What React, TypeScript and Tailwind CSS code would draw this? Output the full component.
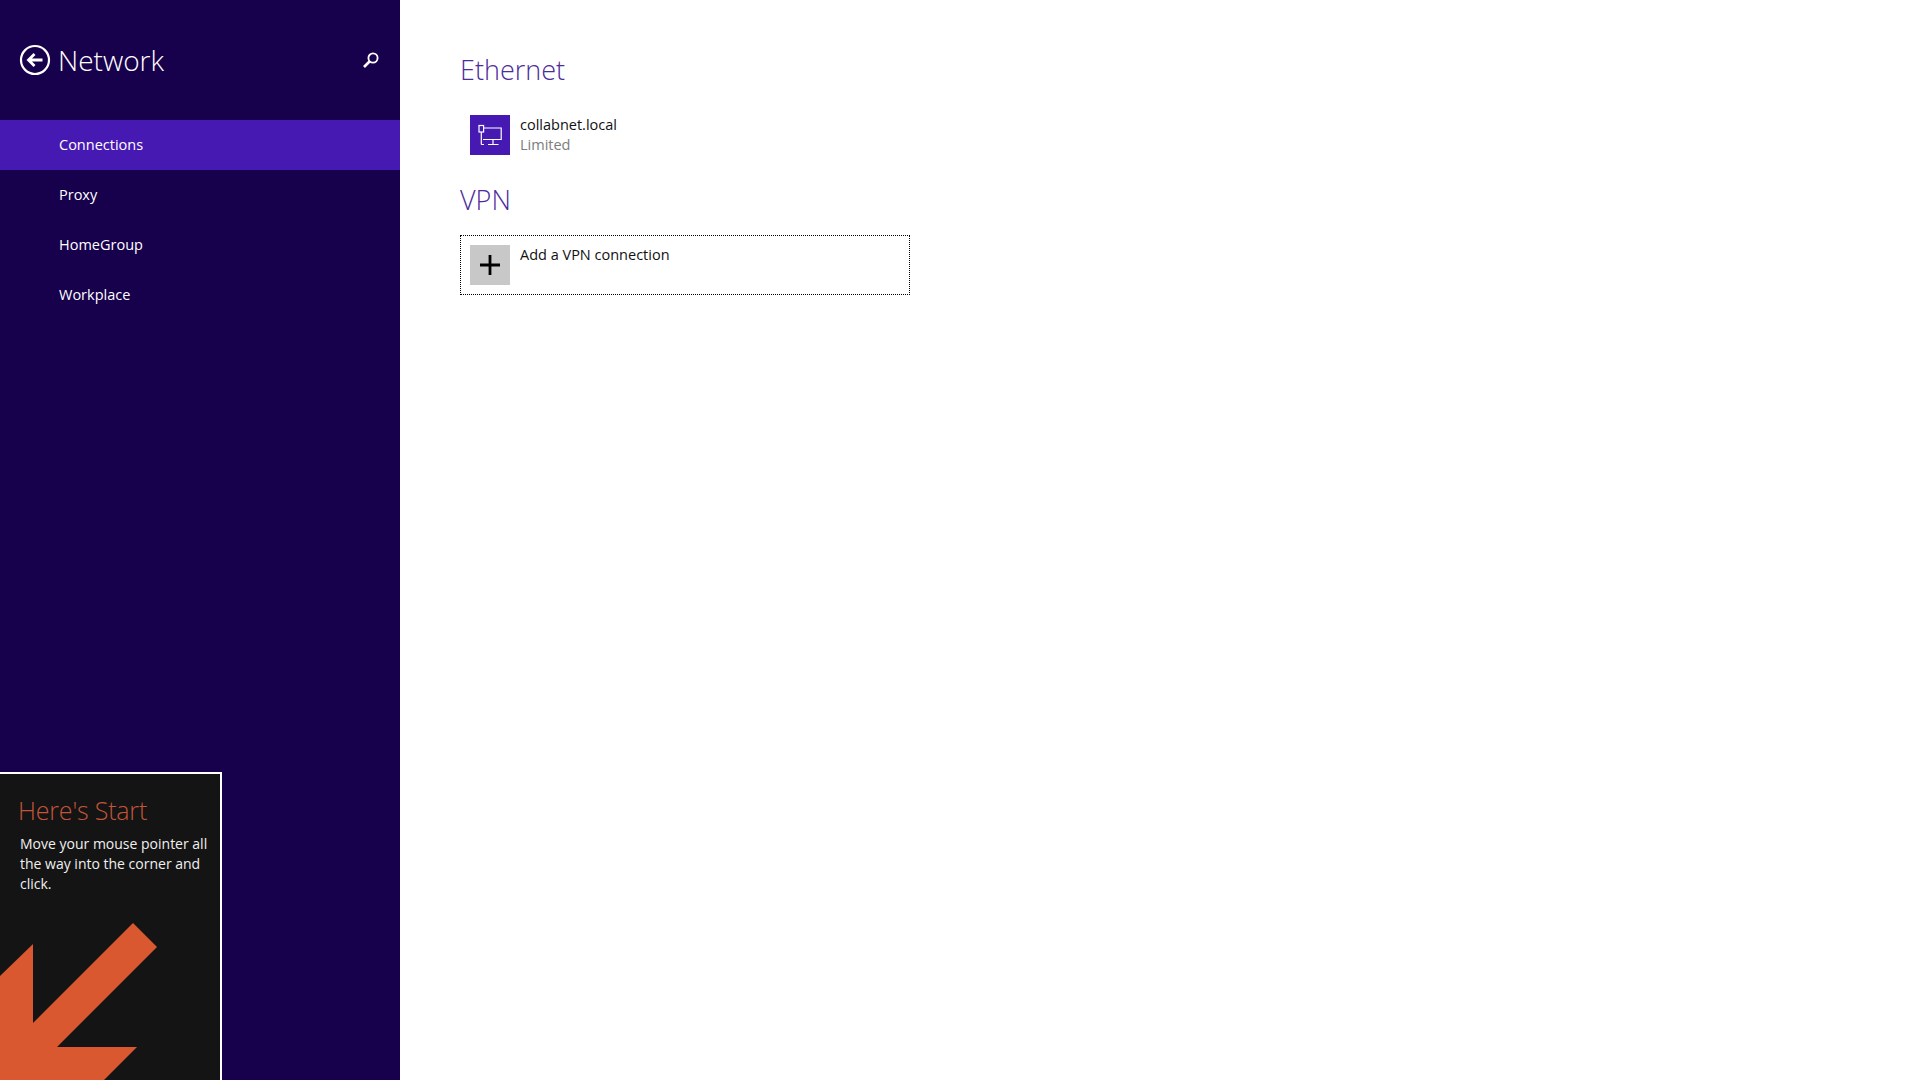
const menu = ["Connections", "Proxy", "HomeGroup", "Workplace"];

function BackIcon() {
  return (
    <svg width="32" height="32" viewBox="0 0 32 32" fill="none" stroke="white">
      <circle cx="16" cy="16" r="14" strokeWidth="2.2" />
      <path d="M23.5 16H10M15.5 10l-6 6 6 6" strokeWidth="2.8" />
    </svg>
  );
}

function SearchIcon() {
  return (
    <svg width="18" height="18" viewBox="0 0 18 18" fill="none" stroke="white">
      <circle cx="11" cy="7" r="4.6" strokeWidth="1.8" />
      <path d="M7.5 10.5L2 16" strokeWidth="2.6" />
    </svg>
  );
}

function EthernetIcon() {
  return (
    <svg width="40" height="40" viewBox="0 0 40 40" fill="none" stroke="white" strokeWidth="1.2">
      <rect x="9" y="10.5" width="4.6" height="6.5" />
      <path d="M11.3 17V29.5M13.5 13H31.2V24.5H13M23 24.5V29.5M18 29.5H28.5M11.3 29.5H14" />
    </svg>
  );
}

function StartTip() {
  return (
    <div className="absolute bottom-0 left-0 w-[222px] h-[308px] bg-[#141414] border-t-2 border-r-2 border-white overflow-hidden">
      <div className="pl-[18px] pt-[19px] text-[25px] leading-[34px] font-light text-[#c4553a] tracking-[-0.2px]">
        Here's Start
      </div>
      <p className="pl-5 pt-[7px] w-[210px] text-[14px] leading-5 text-[#f0f0f0]">
        Move your mouse pointer all the way into the corner and click.
      </p>
      <svg className="absolute left-0 top-0" width="220" height="306" viewBox="0 0 220 306">
        <polygon
          points="133,149 157,173 57,273 137,273 104,306 0,306 0,202 33,170 33,249"
          fill="#d9582f"
        />
      </svg>
    </div>
  );
}

export default function App() {
  return (
    <div className="flex h-screen w-full bg-white font-['Open_Sans','Noto_Sans',sans-serif] overflow-hidden">
      <aside className="relative w-[400px] shrink-0 bg-[#17004c] text-white">
        <div className="flex items-center h-[120px] pl-[19px] pr-[20px] pb-[1px]">
          <BackIcon />
          <h1 className="ml-[7px] text-[28px] font-light">Network</h1>
          <div className="ml-auto">
            <SearchIcon />
          </div>
        </div>
        <nav>
          {menu.map((item, i) => (
            <div
              key={item}
              className={
                i === 0
                  ? "flex items-center h-[50px] pl-[59px] text-[14.5px] bg-[#4719b3]"
                  : "flex items-center h-[50px] pl-[59px] text-[14.5px]"
              }
            >
              {item}
            </div>
          ))}
        </nav>
        <StartTip />
      </aside>
      <main className="pl-[60px] pt-[50px]">
        <h2 className="text-[27px] leading-10 font-light text-[#4c2c9c]">Ethernet</h2>
        <div className="flex gap-[10px] ml-[10px] mt-[25px]">
          <div className="w-10 h-10 bg-[#4719b3]">
            <EthernetIcon />
          </div>
          <div className="text-[14.5px] leading-5 text-[#111] -mt-[0px]">
            <div>collabnet.local</div>
            <div className="text-[#7d7d7d]">Limited</div>
          </div>
        </div>
        <h2 className="mt-[25px] text-[27px] leading-10 font-light text-[#4c2c9c]">VPN</h2>
        <div className="mt-[15px] flex gap-[10px] w-[450px] h-[60px] pl-[9px] pt-[9px] border border-dotted border-black">
          <div className="w-10 h-10 bg-[#c8c8c8] flex items-center justify-center">
            <svg width="20" height="20" viewBox="0 0 20 20" stroke="black" strokeWidth="2.8">
              <path d="M10 0V20M0 10H20" />
            </svg>
          </div>
          <div className="text-[14.5px] leading-5 text-[#111]">Add a VPN connection</div>
        </div>
      </main>
    </div>
  );
}
